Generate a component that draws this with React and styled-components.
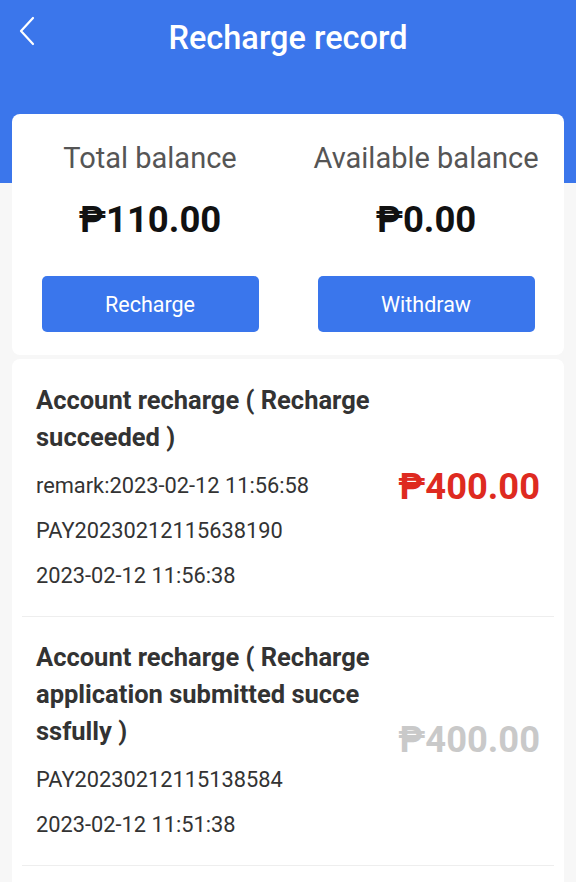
import React from "react";
import styled, { createGlobalStyle } from "styled-components";

const Global = createGlobalStyle`
  html, body { margin: 0; padding: 0; }
  body {
    font-family: Roboto, "Noto Sans", "Liberation Sans", sans-serif;
    background: #f7f7f7;
  }
  * { box-sizing: border-box; }
`;

const Page = styled.div`
  min-height: 882px;
  display: flex;
  flex-direction: column;
  background: linear-gradient(#3b76eb 0, #3b76eb 183px, #f7f7f7 183px);
`;

const NavBar = styled.header`
  height: 76px;
  margin-bottom: 38px;
  display: flex;
  align-items: center;
  justify-content: center;
  position: relative;
`;

const Back = styled.button`
  position: absolute;
  left: 15px;
  top: 13px;
  width: 24px;
  height: 36px;
  border: 0;
  padding: 0;
  background: none;
  display: flex;
  align-items: center;
  justify-content: center;
`;

const Title = styled.h1`
  margin: 0;
  font-size: 32.5px;
  font-weight: 500;
  color: #fff;
`;

const Card = styled.section`
  margin: 0 12px;
  background: #fff;
  border-radius: 8px;
`;

const BalanceCard = styled(Card)`
  display: grid;
  grid-template-columns: 1fr 1fr;
  padding: 24px 0 23px;
`;

const BalanceCol = styled.div`
  display: flex;
  flex-direction: column;
  align-items: center;
`;

const Label = styled.div`
  font-size: 29px;
  line-height: 40px;
  color: #555;
`;

const Amount = styled.div`
  font-size: 36.5px;
  line-height: 44px;
  font-weight: 700;
  color: #111;
  margin-top: 20px;
`;

const ActionButton = styled.button`
  margin-top: 34px;
  width: 217px;
  height: 56px;
  border: 0;
  border-radius: 5px;
  background: #3a76ec;
  color: #fff;
  font-family: inherit;
  font-size: 21.5px;
`;

const ListCard = styled(Card)`
  margin-top: 4px;
  flex: 1;
  border-radius: 8px 8px 0 0;
`;

const Item = styled.div`
  margin: 0 10px;
  padding: 22.5px 14px 25px;
  border-bottom: 1px solid #eeeeee;
  display: flex;
  align-items: center;
  justify-content: space-between;
`;

const Info = styled.div`
  flex: 0 0 336px;
  width: 336px;
`;

const ItemTitle = styled.div`
  font-size: 25.5px;
  line-height: 37px;
  font-weight: 700;
  color: #333;
  word-break: break-all;
`;

const Line = styled.div`
  margin-top: 15px;
  font-size: 21.8px;
  line-height: 30px;
  color: #333;
`;

const Money = styled.div`
  font-size: 36.3px;
  font-weight: 700;
  color: ${(p) => (p.$done ? "#de2a20" : "#c9c9c9")};
  white-space: nowrap;
`;

const records = [
  {
    title: "Account recharge ( Recharge succeeded )",
    lines: ["remark:2023-02-12 11:56:58", "PAY20230212115638190", "2023-02-12 11:56:38"],
    amount: "₱400.00",
    done: true,
  },
  {
    title: "Account recharge ( Recharge application submitted successfully )",
    lines: ["PAY20230212115138584", "2023-02-12 11:51:38"],
    amount: "₱400.00",
    done: false,
  },
];

export default function App() {
  return (
    <Page>
      <Global />
      <NavBar>
        <Back aria-label="back">
          <svg width="18" height="30" viewBox="0 0 18 30" fill="none">
            <polyline points="15,2 3,15 15,28" stroke="#fff" strokeWidth="2.2" strokeLinecap="round" strokeLinejoin="round" />
          </svg>
        </Back>
        <Title>Recharge record</Title>
      </NavBar>
      <BalanceCard>
        <BalanceCol>
          <Label>Total balance</Label>
          <Amount>₱110.00</Amount>
          <ActionButton>Recharge</ActionButton>
        </BalanceCol>
        <BalanceCol>
          <Label>Available balance</Label>
          <Amount>₱0.00</Amount>
          <ActionButton>Withdraw</ActionButton>
        </BalanceCol>
      </BalanceCard>
      <ListCard>
        {records.map((r, i) => (
          <Item key={i}>
            <Info>
              <ItemTitle>{r.title}</ItemTitle>
              {r.lines.map((l, j) => (
                <Line key={j}>{l}</Line>
              ))}
            </Info>
            <Money $done={r.done}>{r.amount}</Money>
          </Item>
        ))}
      </ListCard>
    </Page>
  );
}
